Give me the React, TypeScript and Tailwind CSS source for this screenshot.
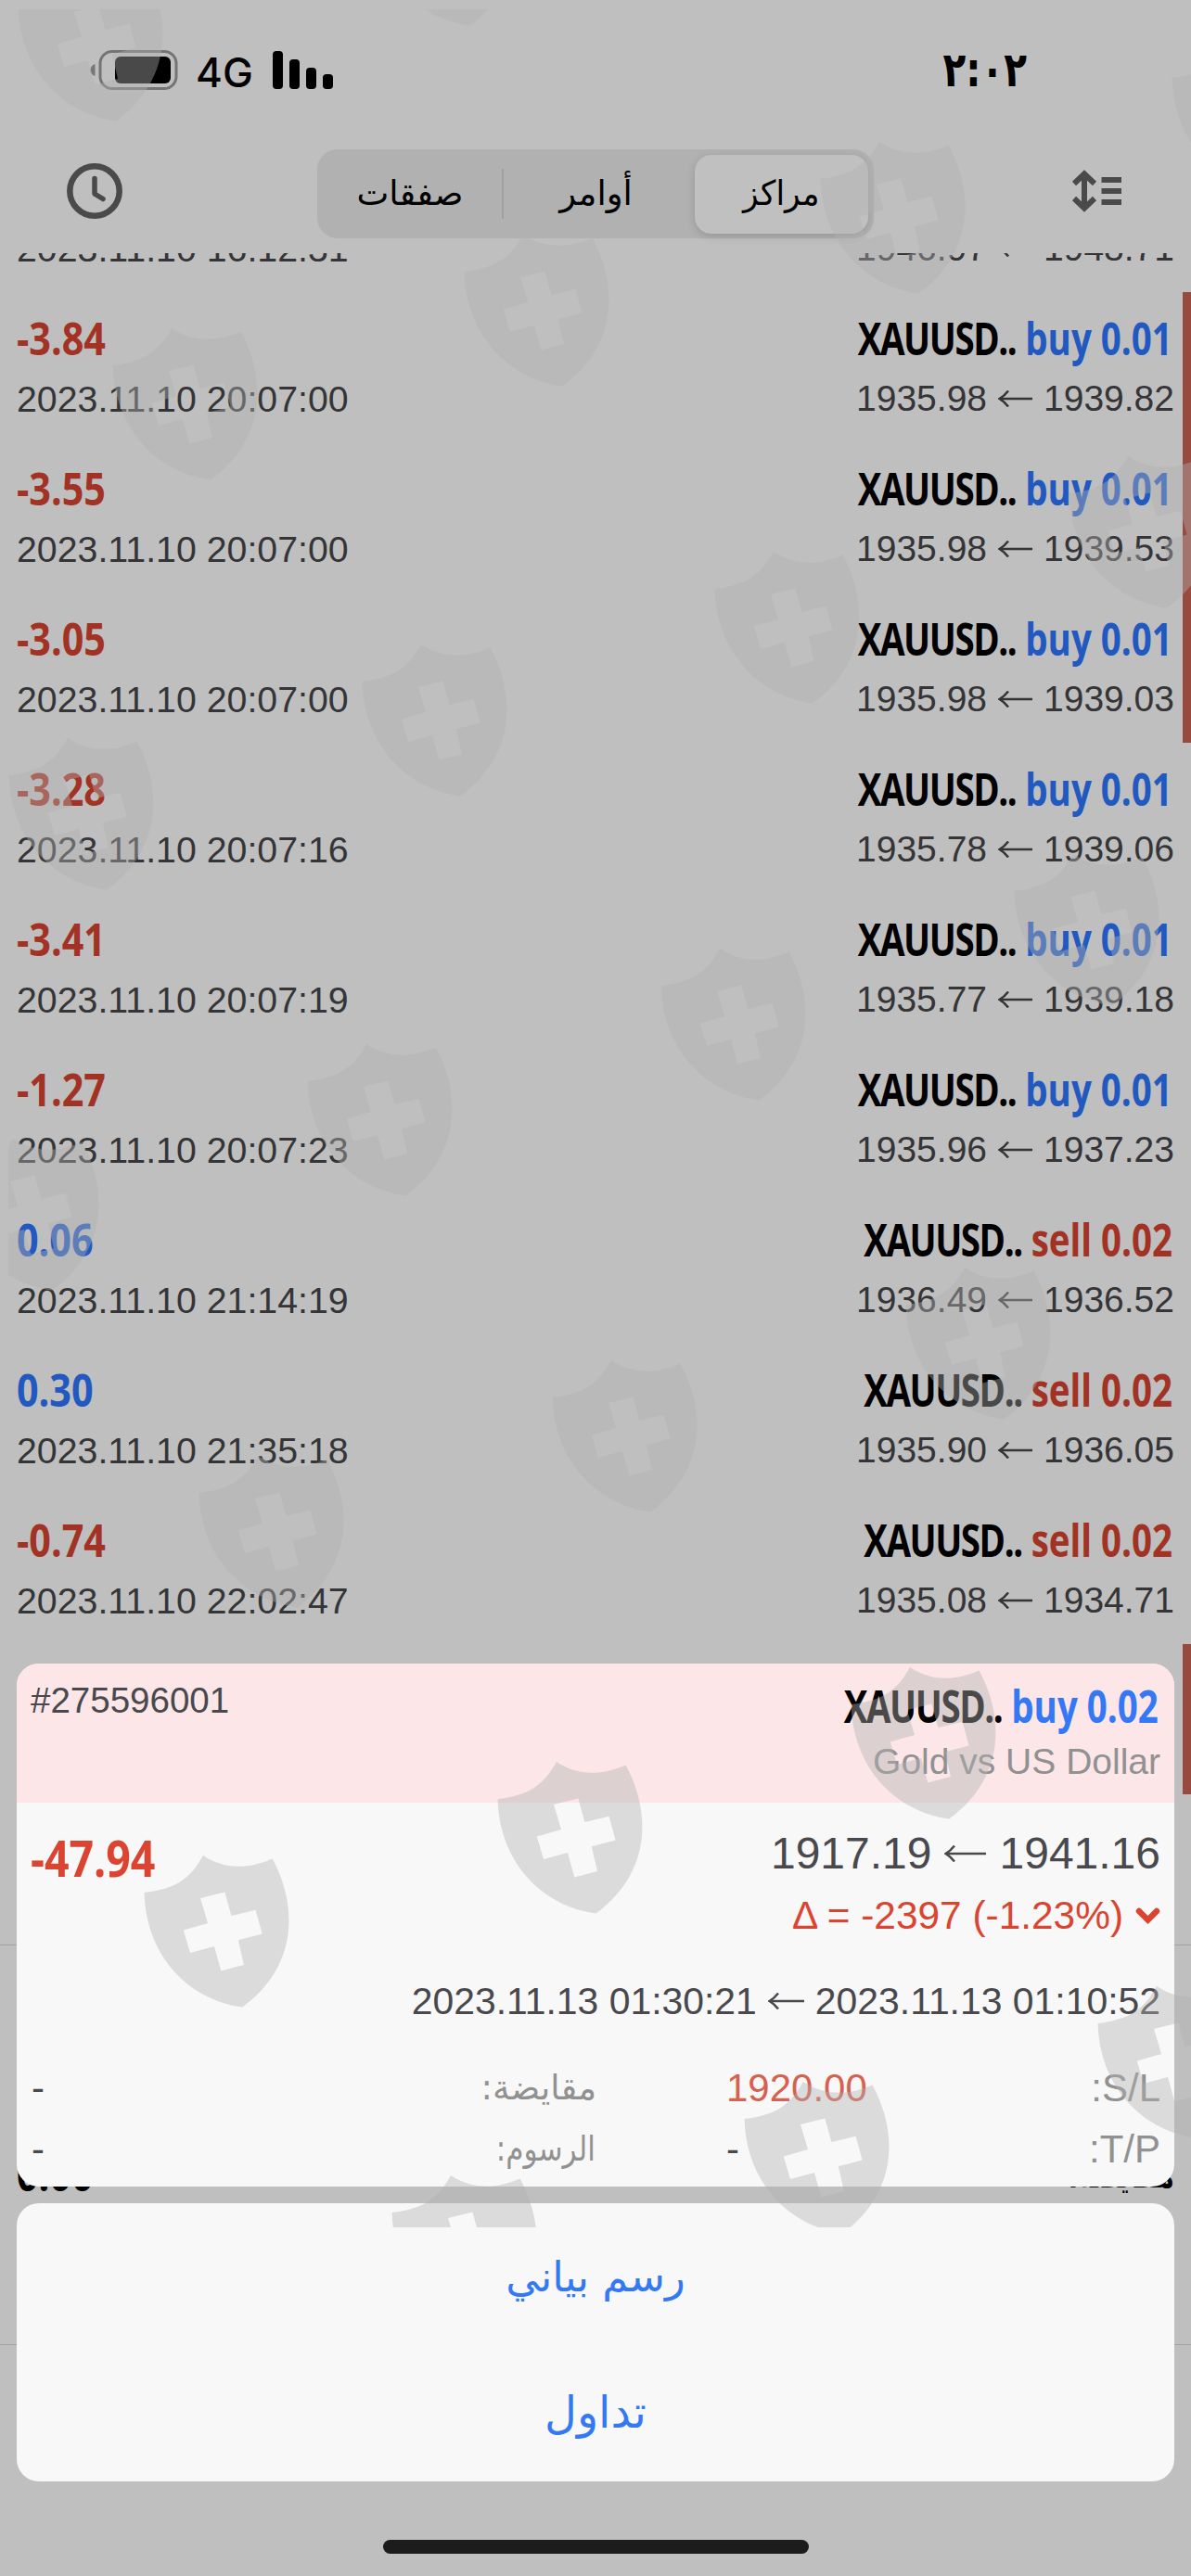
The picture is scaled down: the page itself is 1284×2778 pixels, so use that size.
import React from 'react';

interface Position {
  profit: string;
  time: string;
  side: 'buy' | 'sell';
  volume: string;
  open: string;
  current: string;
  stopped?: boolean;
}

const positions: Position[] = [
  { profit: '-2.74', time: '2023.11.10 16:12:31', side: 'buy', volume: '0.01', open: '1948.71', current: '1946.97' },
  { profit: '-3.84', time: '2023.11.10 20:07:00', side: 'buy', volume: '0.01', open: '1939.82', current: '1935.98', stopped: true },
  { profit: '-3.55', time: '2023.11.10 20:07:00', side: 'buy', volume: '0.01', open: '1939.53', current: '1935.98', stopped: true },
  { profit: '-3.05', time: '2023.11.10 20:07:00', side: 'buy', volume: '0.01', open: '1939.03', current: '1935.98', stopped: true },
  { profit: '-3.28', time: '2023.11.10 20:07:16', side: 'buy', volume: '0.01', open: '1939.06', current: '1935.78' },
  { profit: '-3.41', time: '2023.11.10 20:07:19', side: 'buy', volume: '0.01', open: '1939.18', current: '1935.77' },
  { profit: '-1.27', time: '2023.11.10 20:07:23', side: 'buy', volume: '0.01', open: '1937.23', current: '1935.96' },
  { profit: '0.06', time: '2023.11.10 21:14:19', side: 'sell', volume: '0.02', open: '1936.52', current: '1936.49' },
  { profit: '0.30', time: '2023.11.10 21:35:18', side: 'sell', volume: '0.02', open: '1936.05', current: '1935.90' },
  { profit: '-0.74', time: '2023.11.10 22:02:47', side: 'sell', volume: '0.02', open: '1934.71', current: '1935.08' },
];

// Top-left corner of every shield in the watermark
const shields = [
  [19, -33], [400, -136], [121, 354], [500, 253], [884, 153], [1263, 44],
  [9, 796], [390, 695], [770, 595], [1152, 492],
  [-50, 1228], [331, 1126], [712, 1023], [1093, 921],
  [214, 1570], [595, 1467], [976, 1367],
  [155, 2001], [536, 1900], [917, 1798],
  [422, 2346], [802, 2245], [1183, 2142],
];

const Watermark: React.FC = () => (
  <svg className="absolute inset-0 z-20 pointer-events-none" width="1284" height="2778" viewBox="0 0 1284 2778">
    <clipPath id="area">
      <rect x="9" y="10" width="1275" height="2392" />
    </clipPath>
    <g clipPath="url(#area)" fill="#b1b1b1" fillOpacity="0.41" fillRule="evenodd">
      {shields.map(([x, y]) => (
        <path
          key={`${x},${y}`}
          transform={`translate(${x} ${y})`}
          d="M.6 40C35 36 50 25 64 0C85 14 110 16 138.600 3.500C165 52 168 118 106.300 163.600C45 155 2 105 .6 40ZM61 46L87.400 39.500L94.400 65L120.600 58.800L127.600 84.500L101.800 91.300L108 118L83.300 124.500L76 98L50 105L42.800 80.600L69 73Z"
        />
      ))}
    </g>
  </svg>
);

const Arrow: React.FC<{ width: number }> = ({ width }) => (
  <svg width={width} height="18" viewBox={`0 0 ${width} 18`} fill="none" stroke="currentColor" strokeWidth="2.500">
    <path d={`M${width} 9H1.500M11 .5C7.500 5 5 7 1.500 9C5 11 7.500 13 11 17.500`} />
  </svg>
);

// Condensed bold label, squeezed toward its outer edge
const Bold: React.FC<{ end?: boolean; className?: string; children: React.ReactNode }> = ({ end, className = '', children }) => (
  <span
    className={`inline-block whitespace-nowrap font-bold font-['Open_Sans',sans-serif] ${end ? 'origin-right scale-x-[0.802] mr-[2px]' : 'origin-left scale-x-[0.86]'} ${className}`}
  >
    {children}
  </span>
);

const Symbol: React.FC = () => <span className="tracking-[-1.8px]">XAUUSD..</span>;

const Row: React.FC<{ item: Position }> = ({ item }) => (
  <div className="relative flex justify-between h-[162px] shrink-0 pl-[18px] pr-[18px] pt-[20px]">
    <div className="flex flex-col gap-[11px]">
      <Bold className={`text-[48px] leading-[60px] ${item.profit.startsWith('-') ? 'text-[#a23224]' : 'text-[#2259c0]'}`}>
        {item.profit}
      </Bold>
      <span className="text-[39.3px] leading-[48px] text-[#353538]">{item.time}</span>
    </div>
    <div className="flex flex-col items-end gap-[11px]">
      <Bold end className="text-[48px] leading-[60px] text-black">
        <Symbol /> <span className={item.side === 'buy' ? 'text-[#2259c0]' : 'text-[#a23224]'}>{item.side} {item.volume}</span>
      </Bold>
      <span className="flex items-center gap-3 text-[39px] leading-[48px] text-[#353538]">
        {item.current}
        <Arrow width={37} />
        {item.open}
      </span>
    </div>
    {item.stopped && <div className="absolute right-0 top-0 w-[9px] h-full bg-[#984a3e]" />}
  </div>
);

const StatusBar: React.FC = () => (
  <div className="flex items-start justify-between h-[140px] pl-[97px] pr-[177px] pt-[54px]">
    <div className="flex items-start">
      <svg width="95" height="43" viewBox="0 0 95 43">
        <path d="M5.500 15V28C2 27 .5 24 .5 21.500C.5 19 2 16 5.500 15Z" fill="#777" />
        <rect x="11" y="1.500" width="82" height="40" rx="13" fill="none" stroke="#747474" strokeWidth="3" />
        <rect x="27" y="7" width="60" height="29" rx="6" />
      </svg>
      <span className="ml-[19px] font-['Inter',sans-serif] font-medium text-[44px] leading-[48px]">4G</span>
      <svg className="ml-[21px] mt-px" width="66" height="42" viewBox="0 0 66 42">
        <rect x="0" y="0" width="11" height="41" rx="4" />
        <rect x="18" y="9" width="11" height="32" rx="4" />
        <rect x="36" y="18" width="11" height="23" rx="4" />
        <rect x="54" y="25" width="11" height="16" rx="4" />
      </svg>
    </div>
    <span className="font-['DejaVu_Sans',sans-serif] font-bold text-[52px] leading-[42px] origin-right scale-x-[0.78]">٢:٠٢</span>
  </div>
);

const NavBar: React.FC = () => (
  <div className="flex items-start justify-between h-[133px] pl-[72px] pr-[75px] pt-[21px]">
    <svg className="mt-[15px]" width="60" height="60" viewBox="0 0 60 60" fill="none" stroke="#4a4a4a" strokeWidth="6.500" strokeLinecap="round" strokeLinejoin="round">
      <circle cx="30" cy="30" r="26.700" />
      <path d="M30 16.500V33L39 38.500" strokeWidth="5.500" />
    </svg>
    <div className="flex items-center w-[600px] h-24 mr-1 p-[6px] rounded-[22px] bg-[#b1b1b1] font-['DejaVu_Sans',sans-serif] text-[37px]">
      <span className="w-[193px] pr-1 text-center">صفقات</span>
      <div className="w-[2px] h-[54px] bg-[#a0a0a0]" />
      <span className="w-[206px] pr-1.5 text-center">أوامر</span>
      <span className="flex items-center justify-center w-[187px] h-[85px] rounded-[18px] bg-[#c0c0c0] shadow-[0_3px_10px_rgba(0,0,0,0.15)]">
        <span className="scale-x-[0.93]">مراكز</span>
      </span>
    </div>
    <svg className="mt-[21px]" width="54" height="48" viewBox="0 0 54 48" fill="none" stroke="#4a4a4a" strokeWidth="6">
      <path d="M14 5V43M3 16L14 5.500L25 16M3 32L14 42.500L25 32" />
      <path d="M32.500 12H54M32.500 24H54M32.500 36H54" />
    </svg>
  </div>
);

const DetailRow: React.FC<{ name: string; value: string; fee: string; red?: boolean; children: React.ReactNode }> = ({ name, value, fee, red, children }) => (
  <div className="flex h-[66px] text-[42px] leading-[66px] text-[#919191]">
    <span className="w-[610px] flex justify-between pl-px">
      <span className="text-[#48484d]">{fee}</span>
      {children}
    </span>
    <span className={`pl-[140px] ${red ? 'text-[#d8604f]' : 'text-[#48484d]'}`}>{value}</span>
    <span className="ml-auto">:{name}</span>
  </div>
);

const PositionSheet: React.FC = () => (
  <div className="absolute left-[18px] top-[1794px] z-10 w-[1248px] flex flex-col gap-[18px]">
    <div className="h-[564px] rounded-[24px] overflow-hidden bg-[#f8f8f8] text-[#48484d]">
      <div className="flex justify-between h-[150px] bg-[#fce6e8] pl-[15px] pr-[15px]">
        <span className="text-[38.5px] leading-[48px] mt-[16px]">#275596001</span>
        <div className="flex flex-col items-end pt-[16px]">
          <Bold end className="text-[48px] leading-[60px] text-black">
            <Symbol /> <span className="text-[#3478f6]">buy 0.02</span>
          </Bold>
          <span className="text-[39px] leading-[48px] mt-[6px] text-[#919191]">Gold vs US Dollar</span>
        </div>
      </div>
      <div className="flex justify-between px-[15px]">
        <Bold className="text-[54px] leading-[60px] mt-[29px] text-[#db4430]">-47.94</Bold>
        <div className="flex flex-col items-end pt-[27px]">
          <span className="flex items-center gap-[14px] text-[48px] leading-[56px]">
            1917.19
            <Arrow width={45} />
            1941.16
          </span>
          <span className="flex items-center gap-[13px] mt-[14px] text-[42.4px] leading-[50px] text-[#db4430]">
            Δ = -2397 (-1.23%)
            <svg width="27" height="19" viewBox="0 0 27 19" fill="none" stroke="currentColor" strokeWidth="6.500" strokeLinecap="round">
              <path d="M4 4L13.500 13.500L23 4" />
            </svg>
          </span>
          <span className="flex items-center gap-[12px] mt-[42px] text-[40.9px] leading-[50px]">
            2023.11.13 01:30:21
            <Arrow width={39} />
            2023.11.13 01:10:52
          </span>
        </div>
      </div>
      <div className="px-[15px] mt-[36px]">
        <DetailRow name="S/L" value="1920.00" fee="-" red>
          <span dir="rtl" className="font-['DejaVu_Sans',sans-serif] text-[37px]">مقايضة:</span>
        </DetailRow>
        <DetailRow name="T/P" value="-" fee="-">
          <span dir="rtl" className="font-['DejaVu_Sans',sans-serif] text-[37px] pr-[2px] origin-right scale-x-[0.84]">الرسوم:</span>
        </DetailRow>
      </div>
    </div>
    <div className="flex flex-col h-[300px] rounded-[24px] bg-[#f8f8f8] font-['DejaVu_Sans',sans-serif] text-[45px] text-[#3478f6]">
      <button className="h-[150px] pt-[10px]">رسم بياني</button>
      <button className="h-[150px] text-[48px]">تداول</button>
    </div>
  </div>
);

const App: React.FC = () => {
  return (
    <div className="relative flex flex-col w-[1284px] h-[2778px] overflow-hidden bg-[#bfbfbf] text-black font-['Liberation_Sans',sans-serif]">
      <StatusBar />
      <NavBar />

      {/* Scrolled list of open positions */}
      <div className="flex flex-col h-[2389px] overflow-hidden">
        <div className="flex flex-col -mt-[120px]">
          {positions.map((item, i) => (
            <Row key={i} item={item} />
          ))}
          <div className="flex justify-end h-[162px]">
            <div className="w-[9px] bg-[#984a3e]" />
          </div>
        </div>
        <div className="mt-[162px] h-px bg-[#a2a2a2]" />
        <div className="flex justify-between items-start pl-[18px] pr-[18px] mt-[217px] text-[48px] leading-[60px]">
          <Bold>0.00</Bold>
          <span dir="rtl" className="mt-[2px] font-['DejaVu_Sans',sans-serif] font-bold text-[37px] origin-right scale-x-[0.76]">مقايضة:</span>
        </div>
        <div className="mt-[151px] h-px bg-[#a2a2a2]" />
      </div>

      <PositionSheet />
      <div className="mx-auto mt-[77px] w-[459px] h-[15px] rounded-full bg-[#1c1c1c]" />
      <Watermark />
    </div>
  );
};

export default App;
